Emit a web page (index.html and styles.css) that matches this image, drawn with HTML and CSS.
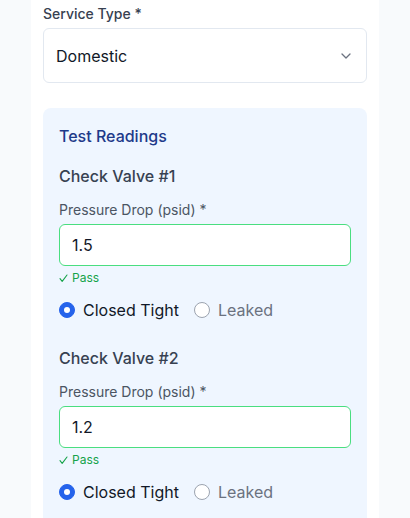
FILE: index.html
```html
<!DOCTYPE html>
<html lang="en">
<head>
<meta charset="utf-8">
<title>Test Form</title>
<link rel="stylesheet" href="styles.css">
</head>
<body>
<div class="page">
  <div class="card">
    <div class="field">
      <label class="label">Service Type *</label>
      <div class="select">
        <span>Domestic</span>
        <svg class="chev" width="12" height="8" viewBox="0 0 12 8"><path d="M2 2 L6 6 L10 2" fill="none" stroke="#6b7280" stroke-width="1.3" stroke-linecap="round" stroke-linejoin="round"/></svg>
      </div>
    </div>

    <section class="readings">
      <h2 class="readings-title">Test Readings</h2>

      <div class="valve">
        <h3 class="valve-title">Check Valve #1</h3>
        <label class="sublabel">Pressure Drop (psid) *</label>
        <div class="input pass-border">1.5</div>
        <div class="pass"><svg class="tick" width="9" height="9" viewBox="0 0 9 9"><path d="M1 4.6 L3.2 7.4 L8 1" fill="none" stroke="#16a34a" stroke-width="1.1" stroke-linecap="round" stroke-linejoin="round"/></svg>Pass</div>
        <div class="radios">
          <span class="opt"><span class="radio checked"></span><span class="opt-text">Closed Tight</span></span>
          <span class="opt"><span class="radio"></span><span class="opt-text muted">Leaked</span></span>
        </div>
      </div>

      <div class="valve">
        <h3 class="valve-title">Check Valve #2</h3>
        <label class="sublabel">Pressure Drop (psid) *</label>
        <div class="input pass-border">1.2</div>
        <div class="pass"><svg class="tick" width="9" height="9" viewBox="0 0 9 9"><path d="M1 4.6 L3.2 7.4 L8 1" fill="none" stroke="#16a34a" stroke-width="1.1" stroke-linecap="round" stroke-linejoin="round"/></svg>Pass</div>
        <div class="radios">
          <span class="opt"><span class="radio checked"></span><span class="opt-text">Closed Tight</span></span>
          <span class="opt"><span class="radio"></span><span class="opt-text muted">Leaked</span></span>
        </div>
      </div>
    </section>
  </div>
</div>
</body>
</html>
```

FILE: styles.css
```css
* { box-sizing: border-box; }
html, body {
  margin: 0;
  padding: 0;
  background: #f8fafc;
  font-family: Inter, "Noto Sans", sans-serif;
  overflow: hidden;
}
.page {
  padding: 0 31px;
  height: 518px;
}
.card {
  background: #ffffff;
  padding: 4px 12px 40px;
  min-height: 560px;
}
.label {
  display: block;
  font-size: 14px;
  line-height: 20px;
  color: #374151;
  font-weight: 500;
  margin-bottom: 4px;
}
.select {
  height: 55px;
  border: 1px solid #e2e8f0;
  border-radius: 6px;
  padding: 0 12px;
  display: flex;
  align-items: center;
  justify-content: space-between;
  font-size: 16px;
  color: #111827;
  background: #fff;
}
.chev { margin-right: 2px; }
.readings {
  margin-top: 25px;
  background: #eff6ff;
  border-radius: 8px;
  padding: 16px 16px 40px;
}
.readings-title {
  margin: 0;
  font-size: 16px;
  line-height: 24px;
  font-weight: 500;
  color: #1e3a8a;
}
.valve { margin-top: 16px; }
.valve + .valve { margin-top: 24px; }
.valve-title {
  margin: 0 0 12px;
  font-size: 16px;
  line-height: 24px;
  font-weight: 500;
  color: #374151;
}
.sublabel {
  display: block;
  font-size: 14px;
  line-height: 20px;
  color: #4b5563;
  margin-bottom: 4px;
}
.input {
  height: 42px;
  background: #fff;
  border: 1px solid #e2e8f0;
  border-radius: 6px;
  padding: 0 12px;
  display: flex;
  align-items: center;
  font-size: 16px;
  color: #111827;
}
.pass-border { border-color: #4ade80; }
.pass {
  margin-top: 4px;
  height: 16px;
  display: flex;
  align-items: center;
  gap: 4px;
  font-size: 12px;
  line-height: 16px;
  color: #16a34a;
}
.tick { flex: none; }
.radios {
  margin-top: 12px;
  display: flex;
  gap: 15px;
  height: 24px;
  align-items: center;
}
.opt {
  display: flex;
  align-items: center;
  gap: 8px;
}
.radio {
  width: 16px;
  height: 16px;
  border-radius: 50%;
  border: 1px solid #9ca3af;
  background: #fff;
  display: inline-block;
  position: relative;
}
.radio.checked {
  background: #2563eb;
  border-color: #2563eb;
}
.radio.checked::after {
  content: "";
  position: absolute;
  left: 4px;
  top: 4px;
  width: 6px;
  height: 6px;
  border-radius: 50%;
  background: #fff;
}
.opt-text {
  font-size: 16px;
  line-height: 24px;
  color: #111827;
}
.opt-text.muted { color: #6b7280; }
```
